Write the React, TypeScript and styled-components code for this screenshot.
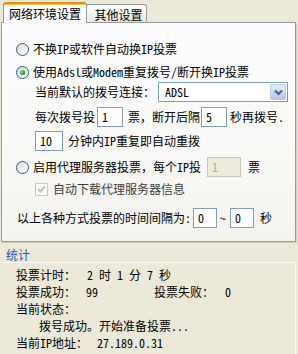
import React from 'react';
import styled, { createGlobalStyle } from 'styled-components';

const Global = createGlobalStyle`
  html, body { margin: 0; padding: 0; background: #ece9d8; }
  body {
    width: 298px; height: 354px; overflow: hidden;
    font-family: "Noto Sans Mono CJK SC", "Noto Sans CJK SC", "Liberation Sans", sans-serif;
    font-size: 12px; color: #000;
  }
  * { box-sizing: border-box; }
`;

const Window = styled.div`
  width: 298px; height: 354px;
  display: flex; flex-direction: column;
  padding-top: 2px;
`;

const TabStrip = styled.div`
  display: flex; align-items: flex-end;
  height: 20px; padding-left: 3px;
`;

const ActiveTab = styled.div`
  position: relative; z-index: 2;
  width: 84px; height: 21px; margin-bottom: -1px;
  border: 1px solid #919b9c; border-bottom: none;
  border-top: 2px solid #e68b2c;
  border-radius: 3px 3px 0 0;
  box-shadow: inset 0 1px 0 #ffc73c;
  background: #fcfcfe;
  display: flex; align-items: center; justify-content: center;
  line-height: 14px; padding-top: 1px;
`;

const Tab = styled.div`
  width: 61px; height: 18px; margin-left: -1px;
  border: 1px solid #919b9c; border-bottom: none;
  border-radius: 3px 3px 0 0;
  background: linear-gradient(#ffffff, #f3f2ec 60%, #e9e7dc);
  display: flex; align-items: center; justify-content: center;
  line-height: 14px; padding-top: 2px; padding-left: 4px;
`;

const Panel = styled.div`
  margin-left: 1px; width: 295px; height: 220px;
  border: 1px solid #919b9c;
  background: linear-gradient(#fcfcfe, #f9f9f7 55%, #f4f3ee);
  box-shadow: 1px 1px 0 #d0cdbd;
  display: flex; flex-direction: column;
  padding: 16px 0 0 14px;
`;

const Row = styled.div<{ $mt?: number; $indent?: number }>`
  display: flex; align-items: center;
  height: 20px; line-height: 14px;
  margin-top: ${p => p.$mt ?? 0}px;
  padding-left: ${p => p.$indent ?? 0}px;
  white-space: pre;
`;

const Text = styled.span<{ $ml?: number; $muted?: boolean }>`
  margin-left: ${p => p.$ml ?? 0}px;
  color: ${p => (p.$muted ? '#3c3c3c' : '#000')};
`;

const Radio = styled.span<{ $checked?: boolean }>`
  width: 13px; height: 13px; flex: none; margin-right: 4px;
  border-radius: 50%; border: 1px solid #2c5d8c;
  background: linear-gradient(135deg, #d6d5ce 0%, #eeeeea 50%, #ffffff 100%);
  display: inline-flex; align-items: center; justify-content: center;
  &::after {
    content: ''; width: 5px; height: 5px; border-radius: 50%;
    background: ${p => (p.$checked ? 'radial-gradient(circle at 35% 35%, #7be07a, #21a121 60%, #18801a)' : 'transparent')};
  }
`;

const CheckBox = styled.span`
  width: 13px; height: 13px; flex: none; margin-right: 5px;
  border: 1px solid #cac8bb; background: #fff;
  display: inline-flex; align-items: center; justify-content: center;
`;

const Field = styled.span<{ $w: number; $ml?: number; $disabled?: boolean }>`
  width: ${p => p.$w}px; height: 20px; flex: none;
  margin-left: ${p => p.$ml ?? 0}px;
  border: 1px solid ${p => (p.$disabled ? '#c9c7ba' : '#7f9db9')};
  background: ${p => (p.$disabled ? '#ebeadb' : '#fff')};
  color: ${p => (p.$disabled ? '#aca899' : '#000')};
  display: flex; align-items: center; padding-left: 4px;
`;

const Select = styled.span`
  width: 130px; height: 20px; flex: none; margin-left: 3px;
  border: 1px solid #7f9db9; background: #fff;
  display: flex; align-items: center; padding: 1px;
`;

const SelectValue = styled.span`
  flex: 1; padding-left: 5px;
`;

const DropButton = styled.span`
  width: 16px; height: 16px; flex: none;
  border: 1px solid #b9cdf7; border-radius: 2px;
  background: linear-gradient(#e3ebfe, #c7d7fa 60%, #b3c7f4);
  display: flex; align-items: center; justify-content: center;
`;

const StatsHeader = styled.div`
  height: 20px; padding: 6px 0 0 6px;
  line-height: 14px; color: #2155c5;
`;

const StatsBox = styled.div`
  flex: 1; margin: 0 2px 0 0;
  border-top: 1px solid #fbfaf6;
  border-right: 1px solid #fbfaf6;
  padding: 3px 0 0 16px;
  display: flex; flex-direction: column;
`;

const StatRow = styled.div<{ $indent?: number }>`
  display: flex; align-items: center;
  height: 17px; line-height: 14px;
  padding-left: ${p => p.$indent ?? 0}px;
  white-space: pre;
`;

const Cell = styled.span<{ $w?: number }>`
  display: inline-block; flex: none;
  width: ${p => (p.$w ? `${p.$w}px` : 'auto')};
`;

const Chevron = () => (
  <svg width="9" height="7" viewBox="0 0 9 7">
    <path d="M1 1.5 L4.5 5 L8 1.5" fill="none" stroke="#4d6185" strokeWidth="2" />
  </svg>
);

const Check = () => (
  <svg width="9" height="9" viewBox="0 0 9 9">
    <path d="M1 4 L3.5 6.5 L8 1.5" fill="none" stroke="#c2c0b3" strokeWidth="2" />
  </svg>
);

export default function App() {
  return (
    <>
      <Global />
      <Window>
        <TabStrip>
          <ActiveTab>网络环境设置</ActiveTab>
          <Tab>其他设置</Tab>
        </TabStrip>
        <Panel>
          <Row>
            <Radio />
            <Text>不换IP或软件自动换IP投票</Text>
          </Row>
          <Row $mt={3}>
            <Radio $checked />
            <Text>使用Adsl或Modem重复拨号/断开换IP投票</Text>
          </Row>
          <Row $indent={19}>
            <Text>当前默认的拨号连接：</Text>
            <Select>
              <SelectValue>ADSL</SelectValue>
              <DropButton><Chevron /></DropButton>
            </Select>
          </Row>
          <Row $mt={5} $indent={19}>
            <Text>每次拨号投</Text>
            <Field $w={26} $ml={2}>1</Field>
            <Text $ml={5}>票，断开后隔</Text>
            <Field $w={26} $ml={1}>5</Field>
            <Text $ml={3}>秒再拨号.</Text>
          </Row>
          <Row $mt={4} $indent={19}>
            <Field $w={28}>10</Field>
            <Text $ml={5}>分钟内IP重复即自动重拨</Text>
          </Row>
          <Row $mt={6}>
            <Radio />
            <Text>启用代理服务器投票，每个IP投</Text>
            <Field $w={34} $ml={6} $disabled>1</Field>
            <Text $ml={7}>票</Text>
          </Row>
          <Row $mt={2} $indent={19}>
            <CheckBox><Check /></CheckBox>
            <Text $muted>自动下载代理服务器信息</Text>
          </Row>
          <Row $mt={9} $indent={1}>
            <Text>以上各种方式投票的时间间隔为:</Text>
            <Field $w={24} $ml={2}>0</Field>
            <Text $ml={3}>~</Text>
            <Field $w={24} $ml={4}>0</Field>
            <Text $ml={6}>秒</Text>
          </Row>
        </Panel>
        <StatsHeader>统计</StatsHeader>
        <StatsBox>
          <StatRow>
            <Cell $w={71}>投票计时：</Cell>
            <Cell>2 时 1 分 7 秒</Cell>
          </StatRow>
          <StatRow>
            <Cell $w={70}>投票成功：</Cell>
            <Cell $w={68}>99</Cell>
            <Cell $w={71}>投票失败：</Cell>
            <Cell>0</Cell>
          </StatRow>
          <StatRow>
            <Cell>当前状态：</Cell>
          </StatRow>
          <StatRow $indent={23}>
            <Cell>拨号成功。开始准备投票...</Cell>
          </StatRow>
          <StatRow>
            <Cell $w={81}>当前IP地址：</Cell>
            <Cell>27.189.0.31</Cell>
          </StatRow>
        </StatsBox>
      </Window>
    </>
  );
}
